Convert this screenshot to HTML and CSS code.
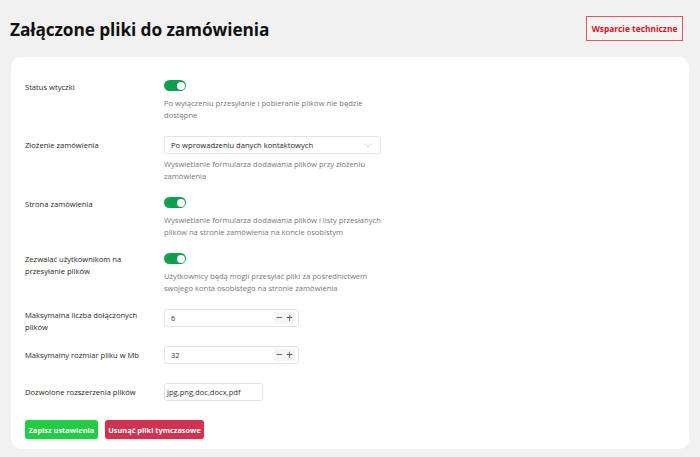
FILE: index.html
```html
<!DOCTYPE html>
<html lang="pl">
<head>
<meta charset="utf-8">
<title>Załączone pliki do zamówienia</title>
<link rel="stylesheet" href="styles.css">
</head>
<body>
<header class="top">
  <h1 class="title">Załączone pliki do zamówienia</h1>
  <a class="support" href="#">Wsparcie techniczne</a>
</header>
<main class="card">
  <div class="row">
    <div class="label label-tg">Status wtyczki</div>
    <div class="control">
      <span class="toggle"><span class="knob"></span></span>
      <p class="desc">Po wyłączeniu przesyłanie i pobieranie plików nie będzie<br>dostępne</p>
    </div>
  </div>
  <div class="row">
    <div class="label label-mid">Złożenie zamówienia</div>
    <div class="control">
      <div class="select">
        <span>Po wprowadzeniu danych kontaktowych</span>
        <svg class="chev" width="8" height="5" viewBox="0 0 8 5"><path d="M0.5 0.5 L4 4 L7.5 0.5" fill="none" stroke="#c4c4c4" stroke-width="0.8"/></svg>
      </div>
      <p class="desc desc-select">Wyświetlanie formularza dodawania plików przy złożeniu<br>zamówienia</p>
    </div>
  </div>
  <div class="row">
    <div class="label label-tg">Strona zamówienia</div>
    <div class="control">
      <span class="toggle"><span class="knob"></span></span>
      <p class="desc">Wyświetlanie formularza dodawania plików i listy przesłanych<br>plików na stronie zamówienia na koncie osobistym</p>
    </div>
  </div>
  <div class="row">
    <div class="label">Zezwalać użytkownikom na<br>przesyłanie plików</div>
    <div class="control">
      <span class="toggle"><span class="knob"></span></span>
      <p class="desc">Użytkownicy będą mogli przesyłać pliki za pośrednictwem<br>swojego konta osobistego na stronie zamówienia</p>
    </div>
  </div>
  <div class="row field">
    <div class="label">Maksymalna liczba dołączonych<br>plików</div>
    <div class="control">
      <div class="input num"><span>6</span><span class="steps"><span>−</span><span>+</span></span></div>
    </div>
  </div>
  <div class="row field">
    <div class="label label-mid">Maksymalny rozmiar pliku w Mb</div>
    <div class="control">
      <div class="input num"><span>32</span><span class="steps"><span>−</span><span>+</span></span></div>
    </div>
  </div>
  <div class="row field">
    <div class="label label-mid">Dozwolone rozszerzenia plików</div>
    <div class="control">
      <div class="input text"><span>jpg,png,doc,docx,pdf</span></div>
    </div>
  </div>
  <div class="actions">
    <button class="btn btn-save" type="button">Zapisz ustawienia</button>
    <button class="btn btn-del" type="button">Usunąć pliki tymczasowe</button>
  </div>
</main>
</body>
</html>
```

FILE: styles.css
```css
* { box-sizing: border-box; }
html, body { margin: 0; padding: 0; }
body {
  background: #f1f1f1;
  font-family: "Open Sans", "Noto Sans", sans-serif;
  color: #333;
  width: 700px;
  height: 457px;
  overflow: hidden;
}
.top {
  display: flex;
  align-items: center;
  justify-content: space-between;
  height: 57px;
  padding: 0 17px 0 10px;
}
.title {
  margin: 0;
  font-size: 17.3px;
  font-weight: 700;
  color: #111;
  letter-spacing: -0.1px;
  position: relative;
  top: 1px;
}
.support {
  display: inline-flex;
  align-items: center;
  justify-content: center;
  width: 97px;
  height: 25px;
  border: 1px solid #e4585d;
  color: #d9131f;
  font-size: 8.4px;
  font-weight: 700;
  text-decoration: none;
  background: #f3f3f3;
}
.card {
  margin: 0 11px;
  background: #fff;
  border-radius: 10px;
  padding: 23px 14px 11px 14px;
  height: 392px;
}
.row {
  display: grid;
  grid-template-columns: 139px 1fr;
  align-items: start;
  margin-bottom: 15px;
}
.row.field {
  height: 37px;
  margin-bottom: 0;
}
.label {
  font-size: 7.6px;
  line-height: 12.4px;
  color: #262626;
}
.label-tg { padding-top: 1px; }
.label-mid { padding-top: 3px; }
.control { display: flex; flex-direction: column; align-items: flex-start; }
.toggle {
  width: 22px;
  height: 11px;
  border-radius: 6px;
  background: #0f9f4f;
  position: relative;
  display: block;
}
.knob {
  position: absolute;
  right: 1.5px;
  top: 1.5px;
  width: 8px;
  height: 8px;
  border-radius: 50%;
  background: #fff;
}
.desc {
  margin: 6px 0 0 0;
  font-size: 7.6px;
  line-height: 12px;
  color: #777;
}
.desc-select { margin-top: 4px; }
.select {
  width: 217px;
  height: 18px;
  border: 1px solid #e4e4e4;
  border-radius: 3px;
  display: flex;
  align-items: center;
  justify-content: space-between;
  padding: 0 8px 0 6px;
  font-size: 7.6px;
  color: #262626;
}
.chev { display: block; }
.input {
  height: 18px;
  border: 1px solid #e4e4e4;
  border-radius: 3px;
  display: flex;
  align-items: center;
  justify-content: space-between;
  padding: 0 3px 0 6px;
  font-size: 7.6px;
  color: #333;
}
.input.num { width: 135px; }
.input.text { width: 99px; padding-left: 2px; }
.steps {
  display: flex;
  gap: 1px;
  background: #f5f5f5;
  padding: 0 1px;
  height: 12px;
  align-items: center;
  font-size: 12px;
  color: #555;
  line-height: 1;
}
.steps span { width: 9px; text-align: center; }
.actions {
  display: flex;
  gap: 7px;
}
.btn {
  height: 19px;
  border: none;
  border-radius: 3px;
  color: #fff;
  font-family: "Open Sans", "Noto Sans", sans-serif;
  font-size: 7.4px;
  font-weight: 700;
  padding: 0;
  box-shadow: 0 1px 2px rgba(0,0,0,0.15);
}
.btn-save { background: #22cc44; width: 73px; }
.btn-del { background: #cf3350; width: 99px; }
```
